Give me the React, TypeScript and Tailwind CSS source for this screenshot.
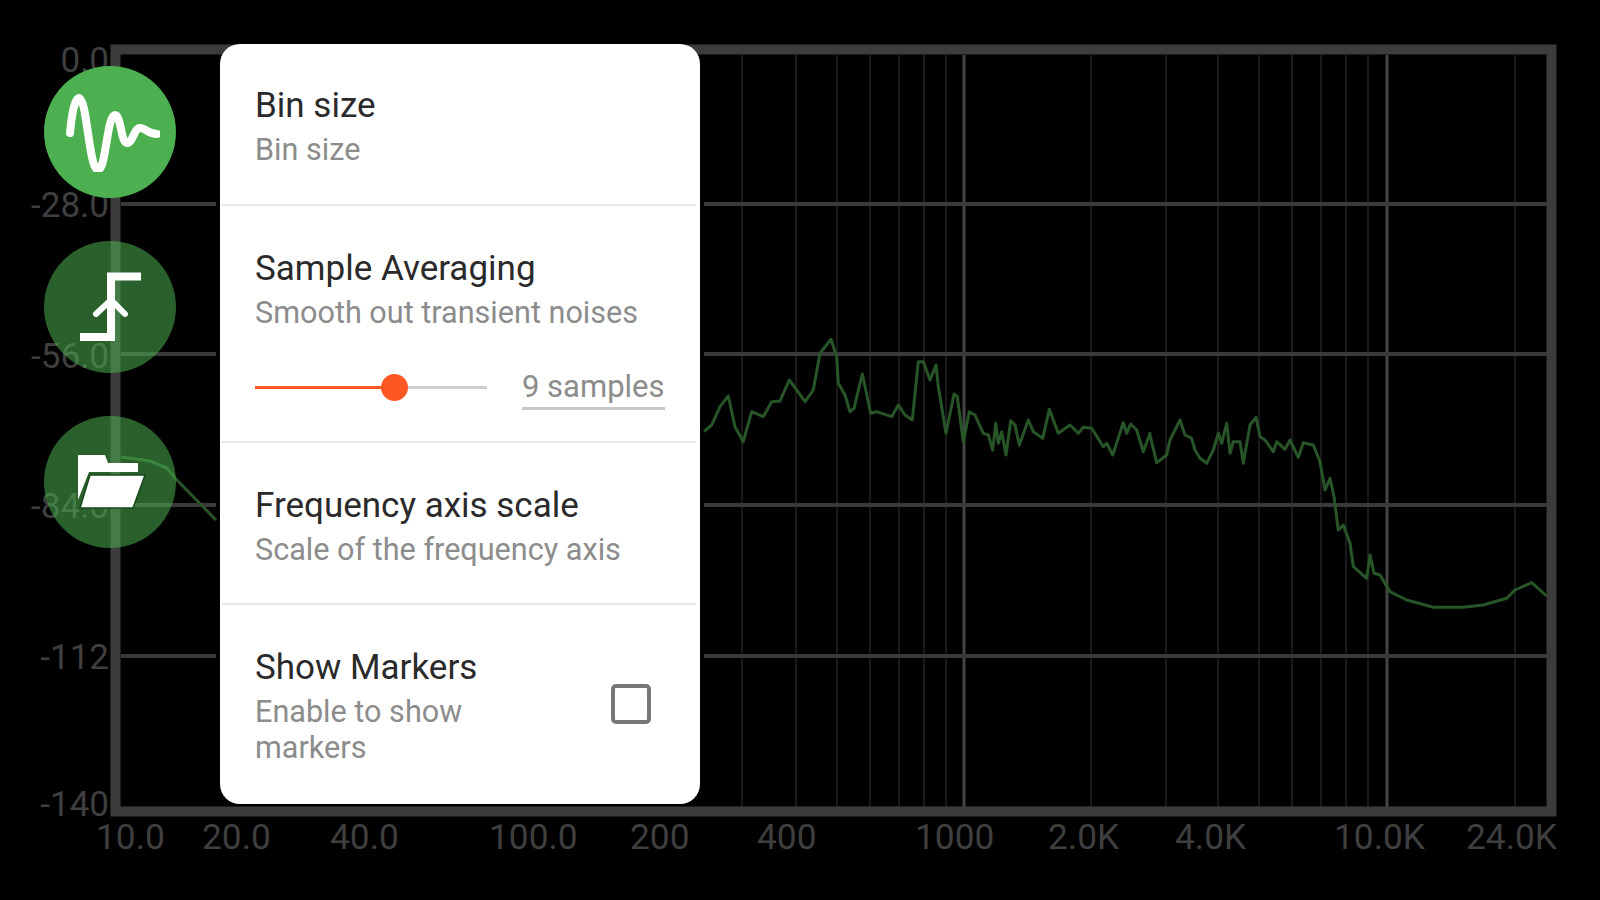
const majorV = [964, 1387];
const minorV = [742, 796, 837, 870, 899, 924, 946, 1091, 1166, 1218, 1259, 1292, 1321, 1346, 1368, 1515];
const hLines = [204, 354, 505, 656];

const zoomA = [[12,395],[35,375],[60,320],[85,288],[105,380],[130,425],[155,335],[190,350],[215,305],[240,303],[268,240],[290,270],[315,305],[340,270],[360,160],[393,118],[410,170],[415,250],[435,285],[450,335],[462,325],[487,222],[512,340],[530,335],[575,350],[595,315],[615,345],[637,360],[655,185],[670,185],[690,240],[708,195],[715,260],[738,400],[762,282],[772,290],[790,425],[808,335],[825,345],[850,400],[865,405],[878,450],[887,370],[895,430],[905,395],[918,465],[932,362],[945,375],[958,435],[985,360],[1000,395],[1028,415],[1048,328],[1075,400],[1110,375],[1135,400],[1150,382],[1175,385],[1210,440],[1220,430],[1238,465],[1270,368],[1280,400],[1292,372],[1310,390],[1330,455],[1350,400]];
const zoomB = [[0,165],[20,248],[50,225],[60,180],[90,120],[105,165],[125,175],[135,210],[150,235],[170,250],[190,210],[205,160],[215,190],[230,130],[240,220],[250,185],[270,185],[280,250],[300,135],[318,112],[330,170],[345,180],[370,215],[380,185],[405,208],[420,180],[445,232],[460,188],[490,195],[510,245],[525,330],[540,295],[552,350],[565,450],[580,435],[600,490],[610,560],[650,595],[660,525],[672,580],[690,585],[720,635],[770,660],[850,682],[940,682],[1000,675],[1070,655],[1095,630],[1145,608],[1190,648]];

const traceRight = [
  ...zoomA.map(([x, y]) => `${(700 + x / 3).toFixed(1)},${(300 + y / 3).toFixed(1)}`),
  ...zoomB.map(([x, y]) => `${(1150 + x / 3).toFixed(1)},${(380 + y / 3).toFixed(1)}`),
].join(" ");

const yLabels = [
  { text: "0.0", top: 41 },
  { text: "-28.0", top: 186 },
  { text: "-56.0", top: 337 },
  { text: "-84.0", top: 487 },
  { text: "-112", top: 638 },
  { text: "-140", top: 785 },
];

const xLabels = [
  { text: "10.0", left: 96 },
  { text: "20.0", left: 202 },
  { text: "40.0", left: 330 },
  { text: "100.0", left: 489 },
  { text: "200", left: 630 },
  { text: "400", left: 757 },
  { text: "1000", left: 915 },
  { text: "2.0K", left: 1048 },
  { text: "4.0K", left: 1175 },
  { text: "10.0K", left: 1334 },
  { text: "24.0K", left: 1466 },
];

function Plot() {
  return (
    <svg width="1600" height="900" viewBox="0 0 1600 900" className="block">
      {minorV.map((x) => (
        <line key={x} x1={x} x2={x} y1={55} y2={807} stroke="#1a1a1a" strokeWidth="2" />
      ))}
      {majorV.map((x) => (
        <line key={x} x1={x} x2={x} y1={55} y2={807} stroke="#444444" strokeWidth="3" />
      ))}
      {hLines.map((y) => (
        <g key={y}>
          <line x1={121} x2={216} y1={y} y2={y} stroke="#3a3a3a" strokeWidth="4" />
          <line x1={704} x2={1548} y1={y} y2={y} stroke="#3a3a3a" strokeWidth="4" />
        </g>
      ))}
      <polyline
        points="121,457 150,461 167,468 175,478 216,520"
        fill="none"
        stroke="#275528"
        strokeWidth="3"
      />
      <polyline points={traceRight} fill="none" stroke="#275528" strokeWidth="3" strokeLinejoin="round" />
      <rect x="115.5" y="49.5" width="1436" height="762" fill="none" stroke="#3c3c3c" strokeWidth="10" />
    </svg>
  );
}

function Row({ title, sub, className, children }: { title: string; sub: string; className: string; children?: React.ReactNode }) {
  return (
    <div className={`ml-[2px] mr-[4px] border-b-2 border-[#e8e8e8] pl-[33px] pr-4 ${className}`}>
      <div className="text-[35px] leading-[40px] text-[#2a2a2a]">{title}</div>
      <div className="mt-[4px] text-[30.6px] leading-[40px] text-[#8c8c8c]">{sub}</div>
      {children}
    </div>
  );
}

export default function App() {
  return (
    <div className="relative w-[1600px] h-[900px] overflow-hidden bg-black font-['Roboto',sans-serif]">
      <Plot />

      {yLabels.map((l) => (
        <span
          key={l.text}
          className="absolute right-[1491px] text-[35px] leading-[40px] text-[#3f3f3f]"
          style={{ top: l.top }}
        >
          {l.text}
        </span>
      ))}
      {xLabels.map((l) => (
        <span
          key={l.text}
          className="absolute top-[817px] text-[35.3px] leading-[40px] text-[#3f3f3f]"
          style={{ left: l.left }}
        >
          {l.text}
        </span>
      ))}

      {/* floating buttons */}
      <div className="absolute left-[44px] top-[66px] flex flex-col gap-[43px]">
        <div className="flex h-[132px] w-[132px] items-center justify-center rounded-full bg-[#4caf50]">
          <svg width="100" height="80" viewBox="0 0 100 80" fill="none" stroke="#ffffff" strokeWidth="8" strokeLinecap="round">
            <path d="M10 41 C12 20 15 6 19 6 C27 6 29 78 38 78 C46 78 47 23 55 23 C61 23 61 51 67 51 C73 51 74 36 80 36 C86 36 88 42 97 42" />
          </svg>
        </div>
        <div className="flex h-[132px] w-[132px] items-center justify-center rounded-full bg-[#4caf50]/55">
          <svg width="100" height="100" viewBox="0 0 100 100" fill="none" stroke="#ffffff" strokeWidth="8">
            <path d="M81 19.5 H51 V80 H20" />
            <path d="M36 57 L51 43 L65 57" strokeWidth="6" strokeLinecap="round" />
          </svg>
        </div>
        <div className="flex h-[132px] w-[132px] items-center justify-center rounded-full bg-[#4caf50]/55">
          <svg width="100" height="80" viewBox="0 0 100 80" fill="#ffffff">
            <path d="M18 13 H45 L48 21 H78 V30 H29 L18 58 Z" />
            <path d="M30 33 H85 L73 66 H20 Z" stroke="#17481c" strokeWidth="1.5" />
          </svg>
        </div>
      </div>

      {/* settings panel */}
      <div className="absolute left-[220px] top-[44px] flex h-[760px] w-[480px] flex-col rounded-[20px] bg-white">
        <Row title="Bin size" sub="Bin size" className="h-[162px] pt-[42px]" />
        <Row title="Sample Averaging" sub="Smooth out transient noises" className="h-[237px] pt-[43px]">
          <div className="mt-[31px] flex items-center gap-[35px]">
            <div className="relative h-[3px] w-[232px] bg-[#cccccc]">
              <div className="h-full w-[139px] bg-[#ff5722]" />
              <div className="absolute left-[126px] top-[-12px] h-[27px] w-[27px] rounded-full bg-[#ff5722]" />
            </div>
            <div className="mt-[3px] w-[143px] border-b-[3px] border-[#c8c8c8] text-[31px] leading-[40px] text-[#8c8c8c]">
              9 samples
            </div>
          </div>
        </Row>
        <Row title="Frequency axis scale" sub="Scale of the frequency axis" className="h-[162px] pt-[43px]" />
        <div className="flex flex-1 items-start pl-[35px] pr-[49px] pt-[43px]">
          <div className="w-[290px]">
            <div className="text-[35px] leading-[40px] text-[#2a2a2a]">Show Markers</div>
            <div className="mt-[6px] text-[30.6px] leading-[36px] text-[#8c8c8c]">Enable to show markers</div>
          </div>
          <div className="ml-auto mt-[36px] h-[40px] w-[40px] rounded-[5px] border-[4px] border-[#777777]" />
        </div>
      </div>
    </div>
  );
}
